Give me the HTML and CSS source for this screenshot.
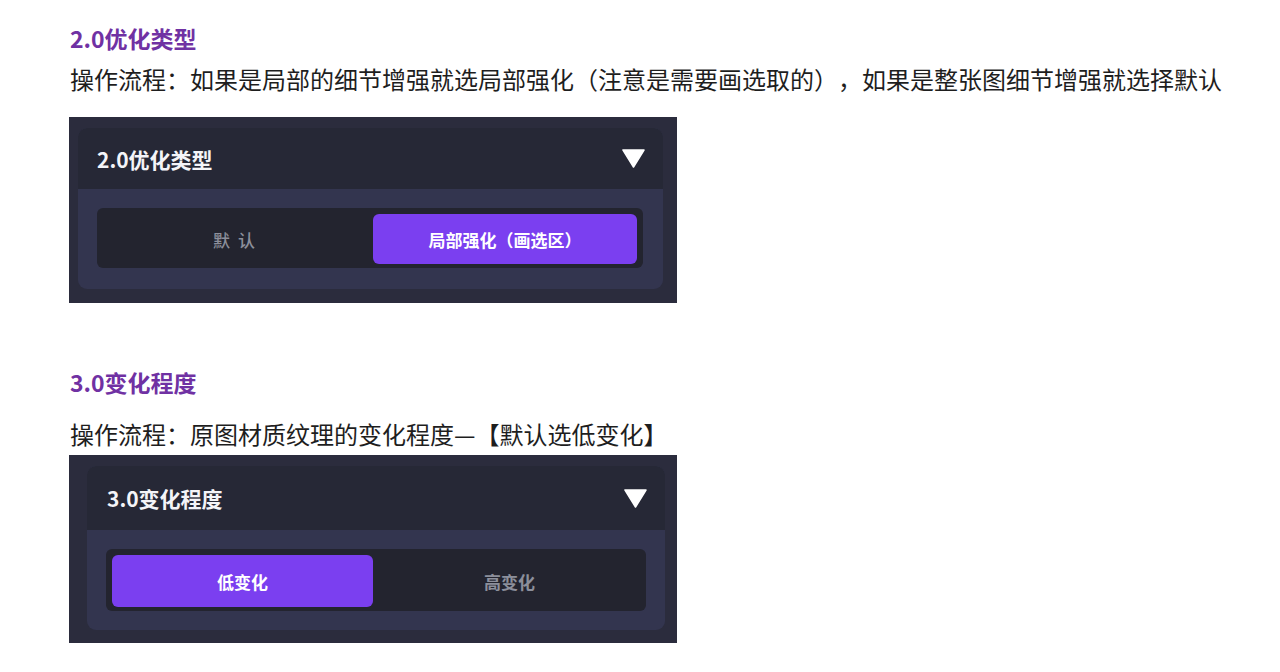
FILE: index.html
```html
<!DOCTYPE html>
<html>
<head>
	<meta charset="UTF-8">
	<title>优化类型与变化程度</title>
	<link rel="stylesheet" href="styles.css">
</head>
<body>
	<div class="doc">
		<h2 class="sec first">2.0优化类型</h2>
		<p class="step">操作流程：如果是局部的细节增强就选局部强化（注意是需要画选取的），如果是整张图细节增强就选择默认</p>
		<div class="shot shot1">
			<div class="card">
				<div class="cardhd">
					<span class="cardttl">2.0优化类型</span>
					<svg class="tri" width="23" height="19" viewBox="0 0 23 19"><polygon points="1,1 22,1 11.5,18" fill="#fff" stroke="#fff" stroke-width="1.5" stroke-linejoin="round"/></svg>
				</div>
				<div class="cardbd">
					<div class="seg">
						<div class="opt spaced">默 认</div>
						<div class="opt on">局部强化（画选区）</div>
					</div>
				</div>
			</div>
		</div>

		<h2 class="sec second">3.0变化程度</h2>
		<p class="step close">操作流程：原图材质纹理的变化程度—【默认选低变化】</p>
		<div class="shot shot2">
			<div class="card">
				<div class="cardhd">
					<span class="cardttl">3.0变化程度</span>
					<svg class="tri" width="23" height="19" viewBox="0 0 23 19"><polygon points="1,1 22,1 11.5,18" fill="#fff" stroke="#fff" stroke-width="1.5" stroke-linejoin="round"/></svg>
				</div>
				<div class="cardbd">
					<div class="seg">
						<div class="opt on">低变化</div>
						<div class="opt">高变化</div>
					</div>
				</div>
			</div>
		</div>
	</div>
</body>
</html>
```

FILE: styles.css
```css
body { margin: 0; background: #FFF; color: #1E1E1E; font-family: "Noto Sans CJK SC", "Liberation Sans", sans-serif;
	text-spacing-trim: space-all; }
.doc { padding: 0 0 0 70px; }
.sec { margin: 0; font-size: 23px; line-height: 30px; font-weight: bold; color: #7031A3; }
.sec.first { padding-top: 23px; }
.sec.second { margin-top: 64px; }
.step { margin: 10px 0 22px 0; font-size: 24px; line-height: 32px; white-space: nowrap; }
.step.close { margin: 21px 0 5px 0; }

.shot { width: 608px; margin-left: -1px; background: #2B2C3D; box-sizing: border-box; }
.shot1 { height: 186px; padding: 11px 14px 0 9px; }
.shot2 { height: 188px; padding: 11px 12px 0 18px; }
.card { border-radius: 9px; overflow: hidden; background: #33354F; }
.cardhd { display: flex; align-items: center; justify-content: space-between; background: #262836;
	padding: 0 18px 0 19px; }
.shot1 .cardhd { height: 61px; }
.shot2 .cardhd { height: 64px; padding-left: 20px; }
.cardttl { color: #F4F4F8; font-size: 21px; font-weight: bold; }
.tri { display: block; }
.cardbd { padding: 19px 20px 21px 19px; }
.shot2 .cardbd { padding: 19px 19px 19px 19px; }
.seg { display: grid; grid-template-columns: 1fr 1fr; gap: 6px; padding: 6px 6px 4px 6px; background: #23242F;
	border-radius: 6px; }
.opt { height: 50px; display: flex; align-items: center; justify-content: center; border-radius: 6px;
	font-size: 17px; font-weight: bold; color: #8C8F9B; }
.shot2 .opt { height: 52px; }
.opt.spaced { font-weight: 500; letter-spacing: 2px; }
.opt.on { background: #7B3FF0; color: #FFF; }
```
